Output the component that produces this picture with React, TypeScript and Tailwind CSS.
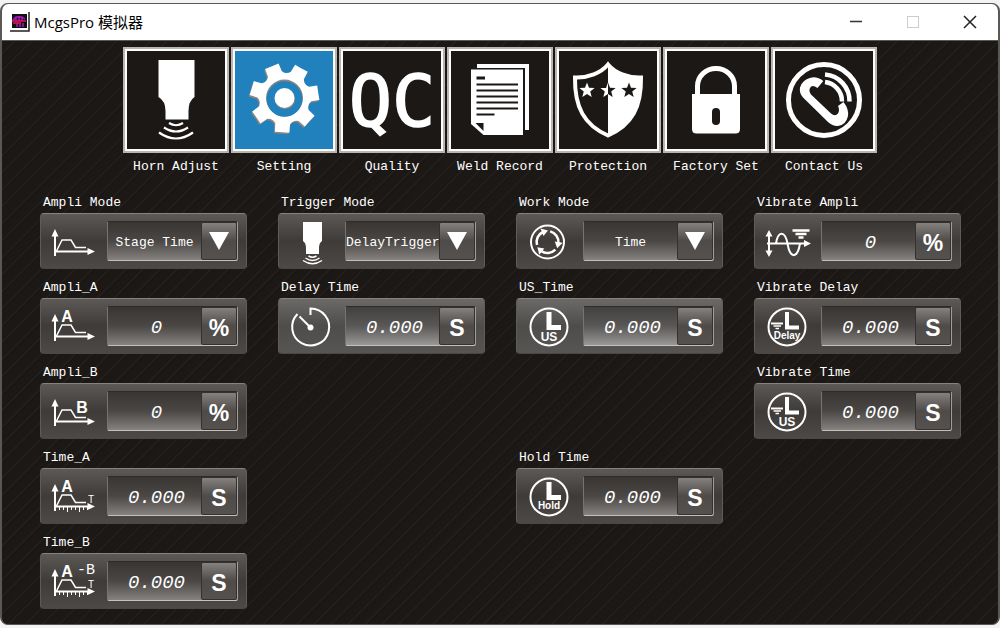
import React, { useState } from "react";

const gearPath = (cx: number, cy: number) => {
  const point = (r: number, deg: number) => {
    const a = (deg * Math.PI) / 180;
    return `${(cx + r * Math.cos(a)).toFixed(2)} ${(cy + r * Math.sin(a)).toFixed(2)}`;
  };

  let d = "";
  for (let i = 0; i < 7; i++) {
    const mid = 94 + (i * 360) / 7;
    d += `${i === 0 ? "M" : "L"}${point(27, mid - 16)} L${point(35, mid - 12)} Q${point(34, mid)} ${point(35, mid + 12)} L${point(27, mid + 16)} Q${point(23.5, mid + 26)} ${point(27, mid + 35.4)} `;
  }
  return d + "Z";
};

const starPath = (cx: number, cy: number) => {
  const pts = [];
  for (let i = 0; i < 10; i++) {
    const r = i % 2 === 0 ? 8 : 3.4;
    const a = -Math.PI / 2 + (i * Math.PI) / 5;
    pts.push(
      `${(cx + r * Math.cos(a)).toFixed(2)} ${(cy + r * Math.sin(a)).toFixed(2)}`,
    );
  }
  return `M${pts.join("L")}Z`;
};

/*TOOLBAR ICONS*/
const NavSvg = ({ children }: { children: React.ReactNode }) => (
  <svg viewBox="0 0 98 98" className="w-full h-full" fill="none" aria-hidden>
    {children}
  </svg>
);

const HornIcon = () => (
  <NavSvg>
    <path d="M31.500 9H67.500V46Q61.500 50 61.500 60V68.500H38.500V60Q38.500 50 31.500 46Z" fill="white" />
    <path
      d="M42 72Q49 76.500 56 72M37 76.500Q49 84.500 61 76.500M32 81.500Q49 93.500 66 81.500"
      stroke="white"
      strokeWidth="2.200"
    />
  </NavSvg>
);

const GearIcon = () => (
  <NavSvg>
    <g transform="translate(-1 1.500)">
      <path d={gearPath(49.5, 47)} fill="#8d8580" />
    </g>
    <path d={gearPath(49.5, 47)} fill="white" />
    <circle cx="49.500" cy="47" r="18.500" fill="#8d8580" />
    <circle cx="49.500" cy="48" r="17.800" fill="#2181bd" />
    <circle cx="50" cy="48" r="10.200" fill="#8d8580" />
    <circle cx="49.500" cy="47" r="10" fill="white" />
  </NavSvg>
);

const QcIcon = () => (
  <NavSvg>
    <text
      x="49"
      y="75"
      textAnchor="middle"
      fill="white"
      stroke="white"
      strokeWidth="1.500"
      className="font-['DejaVu_Sans_Mono',monospace] text-[72px]"
    >
      QC
    </text>
  </NavSvg>
);

const RecordIcon = () => (
  <NavSvg>
    <path d="M26 13H78V79H74V17H26Z" fill="white" />
    <path d="M20 18.500H72V84H32.500L20 73Z" fill="white" />
    <path d="M24.500 72H32.500V80Z" fill="#1c1816" />
    <path d="M25.500 27H34" stroke="#1c1816" strokeWidth="3" />
    <path
      d="M25.500 33.500H67M25.500 39.500H67M25.500 45.500H67M25.500 51.500H67M25.500 57.500H67M25.500 63.500H43.500"
      stroke="#1c1816"
      strokeWidth="2"
    />
  </NavSvg>
);

const ShieldIcon = () => (
  <NavSvg>
    <path
      d="M49 13.500C42 22 29 27 16 26.500C15.500 56 25 74 49 84.500C73 74 82.500 56 82 26.500C69 27 56 22 49 13.500Z"
      stroke="white"
      strokeWidth="4"
    />
    <path
      d="M49 12C56 22 69 27 82 26.500C82.500 56 73 74 49 86Z"
      fill="white"
    />
    <path d={starPath(28, 39.5)} fill="white" />
    <path d={starPath(49, 39.5)} fill="#1c1816" />
    <path
      d="M49 31.500V42.900L44.300 46L45.800 40.600L41.400 37H47Z"
      fill="white"
    />
    <path d={starPath(70, 39.5)} fill="#1c1816" />
  </NavSvg>
);

const LockIcon = () => (
  <NavSvg>
    <path
      d="M30.500 45V35A18.500 17.500 0 0 1 67.500 35V45"
      stroke="white"
      strokeWidth="5"
    />
    <path
      d="M25 43H73V78Q73 82.500 68.500 82.500H29.500Q25 82.500 25 78Z"
      fill="white"
    />
    <rect x="45" y="57" width="8" height="17" rx="4" fill="#1c1816" />
  </NavSvg>
);

const ContactIcon = () => (
  <NavSvg>
    <circle cx="49" cy="49" r="35.500" stroke="white" strokeWidth="5" />
    <path
      d="M35.500 26.700Q42 25 48.300 30L42.500 37Q37 33 35 37Q33.500 40 36 43.500L56 62.500Q60 66 63 62.500Q65 59 63 55L68.500 51Q74 58 73 65Q71 74 63 75Q58 75.500 53 71L28 46.500Q24 42 25 36.500Q27 29 35.500 26.700Z"
      fill="white"
    />
    <path
      d="M50 23.500A26.500 26.500 0 0 1 74.500 50.500M50 31A19.500 19.500 0 0 1 67 50.500"
      stroke="white"
      strokeWidth="4.500"
    />
  </NavSvg>
);

/*FIELD ICONS*/
const FieldSvg = ({ children }: { children: React.ReactNode }) => (
  <svg
    viewBox="1 0 66 56"
    className="w-[66px] h-[56px] shrink-0"
    fill="none"
    stroke="white"
    aria-hidden
  >
    {children}
  </svg>
);

const Letters = ({
  x,
  y,
  children,
  className = "font-bold text-[16px]",
}: {
  x: number;
  y: number;
  children: string;
  className?: string;
}) => (
  <text
    x={x}
    y={y}
    textAnchor="middle"
    fill="white"
    stroke="none"
    className={`font-['Liberation_Sans',sans-serif] ${className}`}
  >
    {children}
  </text>
);

const CurveIcon = ({
  letter,
  ticks,
}: {
  letter?: "A" | "B" | "A-B";
  ticks?: boolean;
}) => (
  <FieldSvg>
    <path d="M15 20V43M14 38.500H49" strokeWidth="2" />
    <path
      d="M15 16L18.500 23.500H11.500ZM55 38.500L47.500 35V42Z"
      fill="white"
      stroke="none"
    />
    <path d="M16.500 38L22 27H31L35.500 34.500H46" strokeWidth="1.500" />
    {ticks && (
      <>
        <path
          d="M19.500 38V42M23.500 38V42M27.500 38V44M31.500 38V42M35.500 38V42M39.500 38V44M43.500 38V42M47.500 38V42"
          strokeWidth="1"
        />
        <Letters x={51} y={35} className="text-[10px]">
          T
        </Letters>
      </>
    )}
    {letter === "B" ? (
      <Letters x={42} y={30}>
        B
      </Letters>
    ) : (
      letter && (
        <Letters x={27} y={24}>
          A
        </Letters>
      )
    )}
    {letter === "A-B" && (
      <text
        x="46"
        y="21"
        textAnchor="middle"
        fill="white"
        stroke="none"
        className="font-['Liberation_Mono',monospace] text-[15px]"
      >
        -B
      </text>
    )}
  </FieldSvg>
);

const SmallHornIcon = () => (
  <FieldSvg>
    <path
      d="M25 9H44V28Q41 30 41 35V41H28V35Q28 30 25 28Z"
      fill="white"
      stroke="none"
    />
    <path
      d="M30.500 43Q34.500 45.500 38.500 43M27.500 45Q34.500 50 41.500 45M25 47.500Q34.500 54 44 47.500"
      strokeWidth="1.500"
    />
  </FieldSvg>
);

const DialIcon = () => (
  <FieldSvg>
    <path d="M32.500 17V10.500A18.500 18.500 0 1 1 19.500 16" strokeWidth="2" />
    <path d="M21.500 18.500L32.500 29.500" strokeWidth="2" />
    <circle cx="32.500" cy="29.500" r="3" fill="white" stroke="none" />
  </FieldSvg>
);

const CycleIcon = () => (
  <FieldSvg>
    <circle cx="31.500" cy="29" r="16.500" strokeWidth="2" />
    {[0, 120, 240].map((deg) => (
      <g key={deg} transform={`rotate(${deg} 31.5 29)`}>
        <path d="M21 32A11 11 0 0 1 27 19" strokeWidth="2.500" />
        <path d="M24.500 15.500L32 17.500L27.500 23Z" fill="white" stroke="none" />
      </g>
    ))}
  </FieldSvg>
);

const ClockIcon = ({ text, ground }: { text: string; ground?: boolean }) => (
  <FieldSvg>
    <circle cx="33" cy="29" r="18.500" strokeWidth="2" />
    <path d="M33 14V29.500H45" strokeWidth={ground ? 4 : 5} />
    {ground && (
      <>
        <path d="M17 25.500H29" strokeWidth="2" />
        <path d="M19.500 28H27M21.500 30.500H25" strokeWidth="1.500" />
      </>
    )}
    <Letters
      x={33}
      y={text === "US" ? 43 : 41}
      className={
        text === "US" ? "font-bold text-[12px]" : "font-bold text-[10px]"
      }
    >
      {text}
    </Letters>
  </FieldSvg>
);

const WaveIcon = () => (
  <FieldSvg>
    <path d="M15 21V40M13 30.500H51" strokeWidth="2" />
    <path
      d="M15 17L18.500 23.500H11.500ZM15 44L18.500 37.500H11.500ZM57 30.500L50 27V34Z"
      fill="white"
      stroke="none"
    />
    <path
      d="M22 30.500C24 17.500 31 17.500 33.500 30.500C36 46 43.500 46 46 30.500"
      strokeWidth="2"
    />
    <path
      d="M38.500 17.500H55.500M41.500 21H52.500M44.500 24.500H49.500"
      strokeWidth="2.500"
    />
  </FieldSvg>
);

const navItems = [
  { label: "Horn Adjust", icon: <HornIcon /> },
  { label: "Setting", icon: <GearIcon /> },
  { label: "Quality", icon: <QcIcon /> },
  { label: "Weld Record", icon: <RecordIcon /> },
  { label: "Protection", icon: <ShieldIcon /> },
  { label: "Factory Set", icon: <LockIcon /> },
  { label: "Contact Us", icon: <ContactIcon /> },
];

type FieldConfig = {
  label: string;
  place: string;
  icon: React.ReactNode;
  value: string;
  unit?: string;
  options?: string[];
  bright?: boolean;
};

const fields: FieldConfig[] = [
  {
    label: "Ampli Mode",
    place: "col-start-1 row-start-1",
    icon: <CurveIcon />,
    value: "Stage Time",
    options: ["Stage Time"],
  },
  {
    label: "Ampli_A",
    place: "col-start-1 row-start-2",
    icon: <CurveIcon letter="A" />,
    value: "0",
    unit: "%",
  },
  {
    label: "Ampli_B",
    place: "col-start-1 row-start-3",
    icon: <CurveIcon letter="B" />,
    value: "0",
    unit: "%",
  },
  {
    label: "Time_A",
    place: "col-start-1 row-start-4",
    icon: <CurveIcon letter="A" ticks />,
    value: "0.000",
    unit: "S",
  },
  {
    label: "Time_B",
    place: "col-start-1 row-start-5",
    icon: <CurveIcon letter="A-B" ticks />,
    value: "0.000",
    unit: "S",
  },
  {
    label: "Trigger Mode",
    place: "col-start-2 row-start-1",
    icon: <SmallHornIcon />,
    value: "DelayTrigger",
    options: ["DelayTrigger"],
  },
  {
    label: "Delay Time",
    place: "col-start-2 row-start-2",
    icon: <DialIcon />,
    value: "0.000",
    unit: "S",
    bright: true,
  },
  {
    label: "Work Mode",
    place: "col-start-3 row-start-1",
    icon: <CycleIcon />,
    value: "Time",
    options: ["Time"],
  },
  {
    label: "US_Time",
    place: "col-start-3 row-start-2",
    icon: <ClockIcon text="US" />,
    value: "0.000",
    unit: "S",
    bright: true,
  },
  {
    label: "Hold Time",
    place: "col-start-3 row-start-4",
    icon: <ClockIcon text="Hold" />,
    value: "0.000",
    unit: "S",
  },
  {
    label: "Vibrate Ampli",
    place: "col-start-4 row-start-1",
    icon: <WaveIcon />,
    value: "0",
    unit: "%",
  },
  {
    label: "Vibrate Delay",
    place: "col-start-4 row-start-2",
    icon: <ClockIcon text="Delay" ground />,
    value: "0.000",
    unit: "S",
  },
  {
    label: "Vibrate Time",
    place: "col-start-4 row-start-3",
    icon: <ClockIcon text="US" ground />,
    value: "0.000",
    unit: "S",
  },
];

const App = () => {
  const [active, setActive] = useState("Setting");

  return (
    <div className="min-h-screen flex flex-col bg-[#f3f3f3] pt-[3px] pb-[3px]">
      <div className="flex-1 flex flex-col bg-[#1c1816] border-x-2 border-t border-b border-[#5a5856] rounded-lg overflow-hidden">
        <TitleBar />

        <main className="flex-1 pt-[6px] pb-3 bg-[repeating-linear-gradient(135deg,#1c1816_0px,#1c1816_8px,#262220_9px,#1c1816_10px,#1a1614_12px)] font-['Liberation_Mono',monospace] text-[13px] leading-[20px] text-white">
          <nav className="flex justify-center gap-[2px]">
            {navItems.map((item) => (
              <button
                key={item.label}
                type="button"
                onClick={() => setActive(item.label)}
                className="w-[106px] flex flex-col items-center gap-1"
              >
                <span className="block w-full aspect-square border-2 border-[#b9b5b0] bg-[#dedad6]">
                  <span
                    className={`block w-full h-full border-2 border-white ${
                      active === item.label ? "bg-[#2181bd]" : "bg-[#1c1816]"
                    }`}
                  >
                    {item.icon}
                  </span>
                </span>
                <span>{item.label}</span>
              </button>
            ))}
          </nav>

          <div className="mt-4 pl-[38px] pr-[37px] grid grid-cols-4 gap-x-[31px] gap-y-[9px]">
            {fields.map((field) => (
              <Field key={field.label} field={field} />
            ))}
          </div>
        </main>
      </div>
    </div>
  );
};

const TitleBar = () => {
  return (
    <header className="h-[37px] bg-white border-b border-[#5a5856] flex items-center pl-2 pr-4 font-['Open_Sans','Noto_Sans_CJK_SC',sans-serif] text-[15px] text-black">
      <svg viewBox="0 0 20 20" className="w-5 h-5 mr-1" aria-hidden>
        <path d="M0 19H19V0" stroke="#222" strokeWidth="1.500" fill="none" />
        <rect x="2" y="2" width="15" height="14" fill="#111" />
        <path
          d="M3 8L6 5H12L15 7M6 5V9M9 4V9M12 5V9M7 11V15M10 11V15M13 11V15"
          stroke="#b414c8"
          strokeWidth="1.500"
          fill="none"
        />
        <path d="M2 9H16M3 11H11" stroke="#e0185a" strokeWidth="1.500" />
      </svg>
      <h1 className="flex-1">McgsPro 模拟器</h1>

      <div className="flex items-center gap-[33px]">
        <button type="button" aria-label="Minimize">
          <svg viewBox="0 0 24 24" className="w-6 h-6" aria-hidden>
            <path d="M6 11.500H18" stroke="#333" strokeWidth="1.500" />
          </svg>
        </button>
        <button type="button" aria-label="Maximize" disabled>
          <svg viewBox="0 0 24 24" className="w-6 h-6" fill="none" aria-hidden>
            <rect x="6.500" y="6.500" width="11" height="11" stroke="#ccc" />
          </svg>
        </button>
        <button type="button" aria-label="Close">
          <svg viewBox="0 0 24 24" className="w-6 h-6" aria-hidden>
            <path
              d="M6 6L18 18M18 6L6 18"
              stroke="#222"
              strokeWidth="1.500"
            />
          </svg>
        </button>
      </div>
    </header>
  );
};

const Field = ({ field }: { field: FieldConfig }) => {
  const id = field.label.toLowerCase().replace(/\W/g, "-");

  return (
    <div className={field.place}>
      <label htmlFor={id} className="block pl-[3px] h-5">
        {field.label}
      </label>
      <div
        className={`flex items-center h-[56px] pr-2 rounded-[4px] border border-t-[#858280] border-x-[#5e5b59] border-b-[#4a4745] bg-linear-to-b ${
          field.bright
            ? "from-[#6c6a69] via-[#4f4d4c] to-[#575554]"
            : "from-[#5c5957] via-[#3e3b39] to-[#4c4947]"
        }`}
      >
        {field.icon}
        <div
          className={`relative flex-1 min-w-0 h-[40px] flex border border-t-[#2e2b2a] border-l-[#77736f] border-r-[#a19d99] border-b-[#c4c0bb] rounded-[2px] bg-linear-to-b ${
            field.bright
              ? "from-[#434140] via-[#5a5857] to-[#9a9897]"
              : "from-[#383533] via-[#4a4745] to-[#85827f]"
          }`}
        >
          {field.options ? (
            <>
              <select
                id={id}
                defaultValue={field.value}
                className="w-full h-full pt-1 pr-9 appearance-none bg-transparent text-center outline-none"
              >
                {field.options.map((option) => (
                  <option key={option} className="text-black">
                    {option}
                  </option>
                ))}
              </select>
              <span className="absolute right-0 top-0 h-full w-9 flex items-center justify-center pointer-events-none rounded-[2px] border border-[#343130] bg-linear-to-b from-[#85817e] via-[#4e4b49] to-[#55514f]">
                <svg viewBox="0 0 20 18" className="w-5 h-[18px]" aria-hidden>
                  <path d="M0 0H20L10 18Z" fill="white" />
                </svg>
              </span>
            </>
          ) : (
            <>
              <input
                id={id}
                type="text"
                inputMode="decimal"
                defaultValue={field.value}
                className="flex-1 min-w-0 pl-1 pt-1 bg-transparent text-center italic text-[19px] outline-none"
              />
              <span className="w-9 shrink-0 pt-1 flex items-center justify-center rounded-[2px] border border-[#343130] bg-linear-to-b from-[#85817e] via-[#4e4b49] to-[#55514f] font-['Liberation_Sans',sans-serif] font-bold text-[23px]">
                {field.unit}
              </span>
            </>
          )}
        </div>
      </div>
    </div>
  );
};

export default App;
